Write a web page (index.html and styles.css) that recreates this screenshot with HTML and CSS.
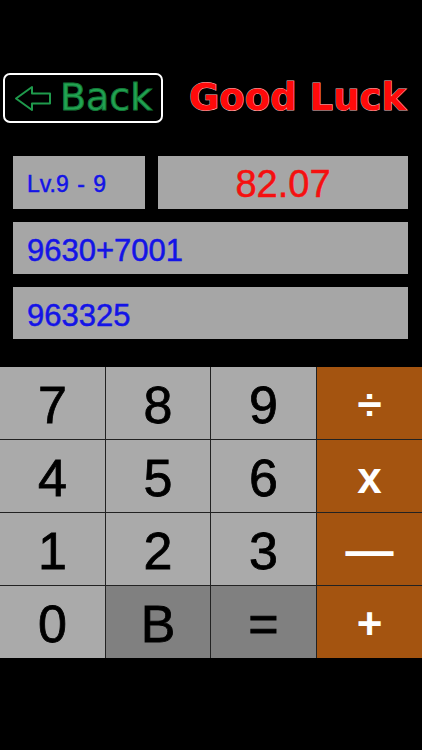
FILE: index.html
```html
<!DOCTYPE html>
<html lang="en">
<head>
    <meta charset="UTF-8">
    <meta name="viewport" content="width=device-width, initial-scale=1.0">
    <title>Calc Game</title>
    <link rel="stylesheet" href="styles.css">
</head>
<body>

    <div class="top-bar">
        <a href="#" class="back-btn">
            <svg class="back-arrow" width="38" height="27" viewBox="0 0 38 27">
                <path d="M2 13.5 L18 2 L18 8.5 L36 8.5 L36 18.5 L18 18.5 L18 25 Z" fill="none" stroke="#1f9a4c" stroke-width="2" stroke-linejoin="round"/>
            </svg>
            <span class="back-text">Back</span>
        </a>
        <h1 class="good-luck">Good Luck</h1>
    </div>

    <div class="panels">
        <div class="panel-row">
            <div class="panel level">Lv.9 - 9</div>
            <div class="panel score">82.07</div>
        </div>
        <div class="panel question">9630+7001</div>
        <div class="panel answer">963325</div>
    </div>

    <div class="keypad">
        <button class="key">7</button>
        <button class="key">8</button>
        <button class="key">9</button>
        <button class="key op">÷</button>
        <button class="key">4</button>
        <button class="key">5</button>
        <button class="key">6</button>
        <button class="key op">x</button>
        <button class="key">1</button>
        <button class="key">2</button>
        <button class="key">3</button>
        <button class="key op minus">—</button>
        <button class="key">0</button>
        <button class="key dark">B</button>
        <button class="key dark">=</button>
        <button class="key op">+</button>
    </div>

</body>
</html>
```

FILE: styles.css
```css
body {
    margin: 0;
    padding: 0;
    background: #000;
    font-family: 'Liberation Sans', Arial, sans-serif;
    width: 422px;
    height: 750px;
    overflow: hidden;
}


.top-bar {
    display: flex;
    align-items: center;
    padding: 73px 0 0 3px;
    height: 50px;
}

.back-btn {
    display: flex;
    align-items: center;
    box-sizing: border-box;
    width: 160px;
    height: 50px;
    border: 2px solid #fff;
    border-radius: 7px;
    padding-left: 9px;
    text-decoration: none;
}

.back-arrow {
    display: block;
    margin-top: 1px;
}

.back-text {
    font-family: 'DejaVu Sans', sans-serif;
    font-size: 38px;
    color: #22a352;
    -webkit-text-stroke: 1px #137a38;
    margin-left: 8px;
    line-height: 1;
    margin-top: -2px;
}

.good-luck {
    margin: -1px 0 0 26px;
    font-family: 'DejaVu Sans', sans-serif;
    font-weight: bold;
    font-size: 37px;
    color: #ff0a0a;
    -webkit-text-stroke: 1px #f2b8b8;
    paint-order: stroke fill;
    line-height: 1;
}


.panels {
    display: flex;
    flex-direction: column;
    gap: 13px;
    padding: 33px 14px 0 13px;
}

.panel-row {
    display: flex;
    gap: 13px;
}

.panel {
    background: #a6a6a6;
    height: 53px;
    display: flex;
    align-items: center;
    box-sizing: border-box;
    padding: 3px 0 0 14px;
    color: #1414e6;
    -webkit-text-stroke: 0.5px currentColor;
}

.level {
    width: 132px;
    font-size: 23px;
    word-spacing: 2px;
}

.score {
    flex: 1;
    justify-content: center;
    padding-left: 0;
    color: #f51010;
    font-size: 38px;
}

.question, .answer {
    height: 52px;
    font-size: 31px;
    padding-top: 6px;
}


.keypad {
    display: grid;
    grid-template-columns: 105px 104px 105px 105px;
    grid-template-rows: repeat(4, 72px);
    gap: 1px;
    background: #222;
    margin-top: 28px;
}

.key {
    border: none;
    padding: 3px 0 0;
    margin: 0;
    background: #aaaaaa;
    color: #000;
    font-family: 'Liberation Sans', Arial, sans-serif;
    font-size: 52px;
    line-height: 1;
    -webkit-text-stroke: 0.8px #000;
    cursor: pointer;
}

.key.dark {
    background: #808080;
}

.key.op {
    background: #a45410;
    color: #fff;
    font-weight: bold;
    font-size: 44px;
    -webkit-text-stroke: 0;
}

.key.minus {
    font-size: 48px;
}
```
